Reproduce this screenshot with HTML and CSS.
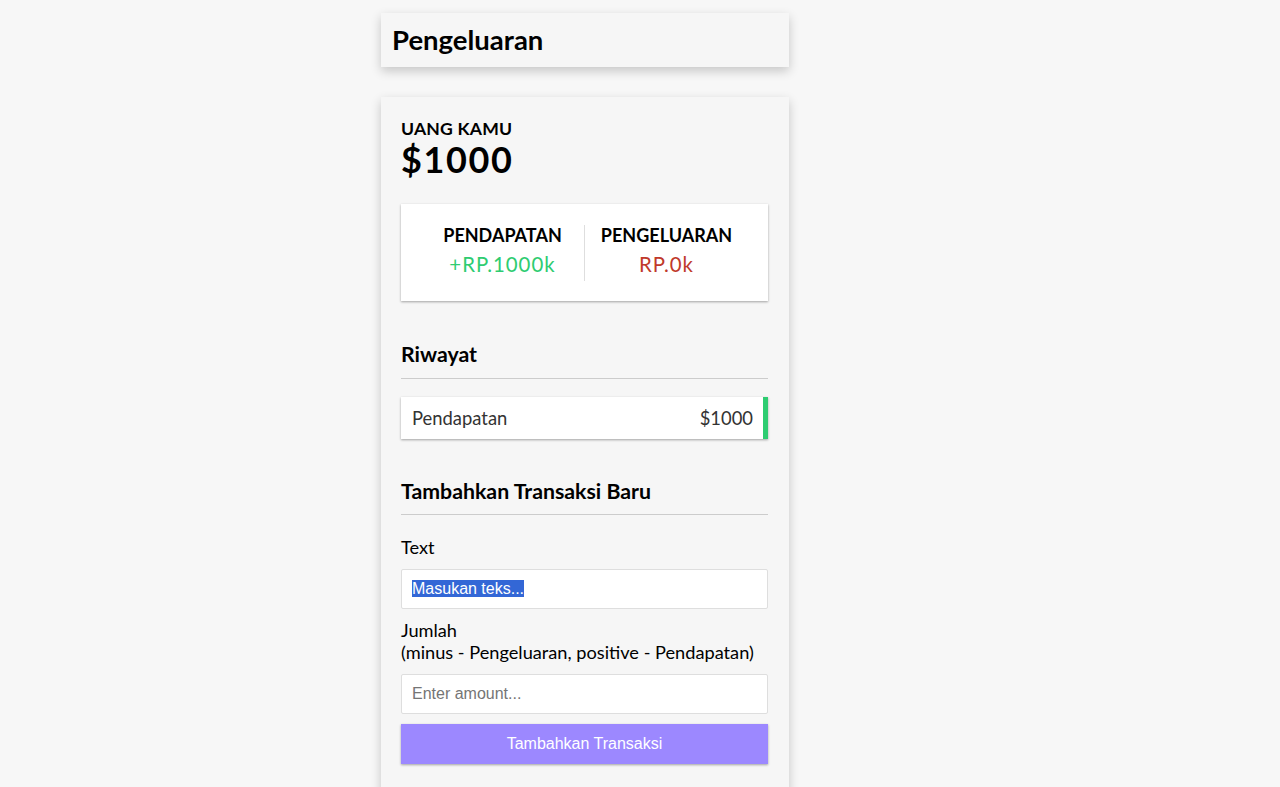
FILE: index.html
```html
<!DOCTYPE html>
<html lang="id">
<head>
<meta charset="utf-8">
<title>Pengeluaran</title>
<link rel="stylesheet" href="styles.css">
</head>
<body>
<div class="page">
  <header class="title-card">
    <h1 class="title">Pengeluaran</h1>
  </header>
  <main class="card">
    <h4 class="balance-label">Uang Kamu</h4>
    <h1 class="balance">$1000</h1>
    <div class="inc-exp">
      <div class="inc-exp-col inc-exp-col--first">
        <h4 class="inc-exp-title">Pendapatan</h4>
        <p class="money money--plus">+RP.1000k</p>
      </div>
      <div class="inc-exp-col">
        <h4 class="inc-exp-title">Pengeluaran</h4>
        <p class="money money--minus">RP.0k</p>
      </div>
    </div>
    <h3 class="section-title section-title--first">Riwayat</h3>
    <ul class="list">
      <li class="list-item list-item--plus"><span>Pendapatan</span><span>$1000</span></li>
    </ul>
    <h3 class="section-title">Tambahkan Transaksi Baru</h3>
    <form class="form">
      <div class="form-control">
        <label class="label" for="text">Text</label>
        <div class="input input--text" id="text" role="textbox"><span class="selected">Masukan teks...</span></div>
      </div>
      <div class="form-control">
        <label class="label" for="amount">Jumlah <br>(minus - Pengeluaran, positive - Pendapatan)</label>
        <input class="input" type="number" id="amount" placeholder="Enter amount...">
      </div>
      <button class="btn" type="button">Tambahkan Transaksi</button>
    </form>
  </main>
</div>
</body>
</html>
```

FILE: styles.css
```css
* { box-sizing: border-box; }

html, body {
  margin: 0;
  background: #f7f7f7;
}

body {
  font-family: Lato, "Noto Sans", sans-serif;
  color: #000;
}

.page {
  padding: 13px 0 0 381px;
}

.title-card,
.card {
  width: 408px;
  background: #f6f6f6;
  box-shadow: 0 4px 10px rgba(0, 0, 0, 0.2);
}

.title-card {
  height: 54px;
  padding: 10px 11px 0;
}

.title {
  margin: 0;
  font-size: 27.5px;
  font-weight: 700;
  line-height: 33px;
}

.card {
  margin-top: 30px;
  padding: 21px 21px 1px 20px;
}

.balance-label {
  margin: 0;
  font-size: 17.6px;
  font-weight: 700;
  letter-spacing: 0.2px;
  text-transform: uppercase;
  line-height: 22px;
}

.balance {
  margin: 0;
  font-size: 36px;
  font-weight: 700;
  letter-spacing: 1.6px;
  line-height: 39.6px;
}

.inc-exp {
  display: flex;
  margin: 24.5px 0 20px;
  padding: 21px 20px 20px;
  background: #fff;
  box-shadow: 0 1px 3px rgba(0, 0, 0, 0.12), 0 1px 2px rgba(0, 0, 0, 0.24);
}

.inc-exp-col {
  flex: 1;
  text-align: center;
}

.inc-exp-col--first {
  border-right: 1px solid #dedede;
}

.inc-exp-title {
  margin: 0;
  font-size: 18px;
  font-weight: 700;
  text-transform: uppercase;
  line-height: 21.6px;
}

.money {
  margin: 5px 0;
  font-size: 20.4px;
  letter-spacing: 1px;
  line-height: 24.5px;
}

.money--plus { color: #2ecc71; }
.money--minus { color: #c0392b; }

.section-title {
  margin: 40px 0 10px;
  padding-bottom: 10px;
  border-bottom: 1px solid #ccc;
  font-size: 21.3px;
  font-weight: 700;
  line-height: 25.6px;
}

.section-title--first {
  margin-top: 41px;
}

.list {
  list-style: none;
  margin: 18px 0 0;
  padding: 0;
}

.list-item {
  display: flex;
  justify-content: space-between;
  padding: 10px 10px 10px 11px;
  background: #fff;
  color: #333;
  font-size: 18.4px;
  line-height: 22.1px;
  box-shadow: 0 1px 3px rgba(0, 0, 0, 0.12), 0 1px 2px rgba(0, 0, 0, 0.24);
}

.list-item--plus {
  border-right: 5px solid #2ecc71;
}

.form {
  margin: 0;
}

.label {
  display: inline-block;
  margin: 10.5px 0;
  font-size: 18.2px;
  line-height: 22.1px;
}

.input {
  display: block;
  width: 100%;
  height: 40px;
  margin: 0;
  padding: 10px;
  border: 1px solid #dedede;
  border-radius: 2px;
  background: #fff;
  font-family: "Liberation Sans", Arial, sans-serif;
  font-size: 16px;
  line-height: 18px;
  color: #000;
}

.input::placeholder {
  color: #757575;
}

.selected {
  background: #3367d6;
  color: #fff;
}

.btn {
  display: block;
  width: 100%;
  height: 40px;
  margin: 10px 0 30px;
  padding: 10px;
  border: 0;
  background: #9c88ff;
  color: #fff;
  font-family: "Liberation Sans", Arial, sans-serif;
  font-size: 16px;
  box-shadow: 0 1px 3px rgba(0, 0, 0, 0.12), 0 1px 2px rgba(0, 0, 0, 0.24);
  cursor: pointer;
}
```
